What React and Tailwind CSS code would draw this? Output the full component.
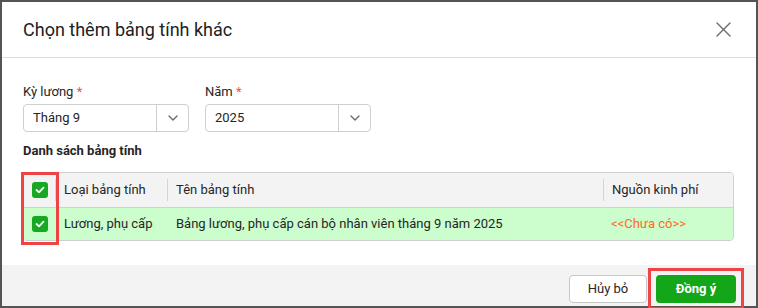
import React from "react";

const Chevron = () => (
  <svg width="12" height="8" viewBox="0 0 12 8" fill="none">
    <path d="M2 2L6 6L10 2" stroke="#666" strokeWidth="1.3" strokeLinecap="round" strokeLinejoin="round" />
  </svg>
);

const Check = () => (
  <div className="w-4 h-4 rounded-[3px] bg-[#17a923] flex items-center justify-center">
    <svg width="10" height="8" viewBox="0 0 10 8" fill="none">
      <path d="M1.5 4L4 6.3L8.5 1.7" stroke="white" strokeWidth="1.8" strokeLinecap="round" strokeLinejoin="round" />
    </svg>
  </div>
);

const Select = ({ value }) => (
  <div className="w-[166px] h-[28px] border border-[#cfcfcf] rounded-[4px] flex bg-white">
    <div className="flex-1 flex items-center pl-[9px] text-[13px] text-[#262626]">{value}</div>
    <div className="w-[32px] border-l border-[#cfcfcf] flex items-center justify-center">
      <Chevron />
    </div>
  </div>
);

const HeadCell = ({ children }) => (
  <div className="flex items-center">
    <div className="w-px h-[22px] bg-[#d4d4d4]" />
    <span className="pl-2">{children}</span>
  </div>
);

export default function App() {
  return (
    <div
      className="relative w-[758px] h-[308px] border-2 border-[#545454] bg-white flex flex-col text-[#262626]"
      style={{ fontFamily: "Roboto, 'Noto Sans', sans-serif" }}
    >
      <div className="h-[56px] shrink-0 border-b border-[#dcdcdc] flex items-center justify-between pl-[21px] pr-[25px]">
        <div className="text-[18px] text-[#212121]">Chọn thêm bảng tính khác</div>
        <svg width="15" height="15" viewBox="0 0 15 15" fill="none">
          <path d="M1 1L14 14M14 1L1 14" stroke="#6b6b6b" strokeWidth="1.4" strokeLinecap="round" />
        </svg>
      </div>

      <div className="h-[207px] shrink-0 pt-[26px] pl-[21px] pr-[22px]">
        <div className="flex gap-[16px]">
          <div>
            <div className="text-[13px] leading-4 mb-1">
              Kỳ lương <span className="text-[#f05050]">*</span>
            </div>
            <Select value="Tháng 9" />
          </div>
          <div>
            <div className="text-[13px] leading-4 mb-1">
              Năm <span className="text-[#f05050]">*</span>
            </div>
            <Select value="2025" />
          </div>
        </div>
        <div className="mt-[11px] text-[13px] leading-4 font-bold text-[#262626]">Danh sách bảng tính</div>
        <div className="mt-[13px] w-[711px] border border-[#d0d0d0] rounded-[4px] overflow-hidden text-[13px]">
          <div className="grid grid-cols-[31px_112px_436px_1fr] h-[35px] bg-[#f3f3f3] border-b border-[#d0d0d0]">
            <div className="flex items-center justify-center">
              <Check />
            </div>
            <HeadCell>Loại bảng tính</HeadCell>
            <HeadCell>Tên bảng tính</HeadCell>
            <HeadCell>Nguồn kinh phí</HeadCell>
          </div>
          <div className="grid grid-cols-[31px_112px_436px_1fr] h-[32px] bg-[#ccfdcc]">
            <div className="flex items-center justify-center">
              <Check />
            </div>
            <div className="flex items-center pl-[9px]">Lương, phụ cấp</div>
            <div className="flex items-center pl-[9px]">Bảng lương, phụ cấp cán bộ nhân viên tháng 9 năm 2025</div>
            <div className="flex items-center pl-[8px] text-[#ff6a1f]">&lt;&lt;Chưa có&gt;&gt;</div>
          </div>
        </div>
      </div>

      <div className="flex-1 bg-[#f3f3f3] flex justify-end items-start pt-[10px] pr-[20px] gap-[9px]">
        <button className="w-[78px] h-[28px] bg-white border border-[#c8c8c8] rounded-[4px] text-[13px] text-[#262626]">
          Hủy bỏ
        </button>
        <button className="w-[80px] h-[28px] bg-[#14a619] rounded-[4px] text-[13px] font-bold text-white">
          Đồng ý
        </button>
      </div>

      <div className="absolute left-[19px] top-[170px] w-[38px] h-[73px] border-[3px] border-[#f04343]" />
      <div className="absolute left-[646px] top-[266px] w-[96px] h-[42px] border-[3px] border-[#f04343]" />
    </div>
  );
}
